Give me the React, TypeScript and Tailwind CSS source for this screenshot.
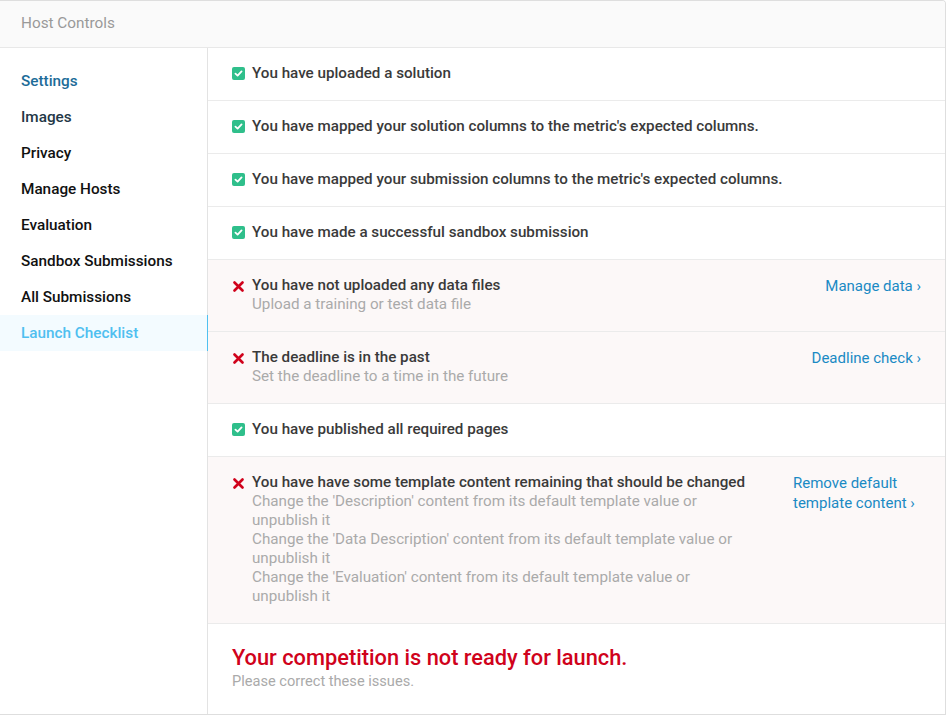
import React from "react";

const font = { fontFamily: "Roboto, 'Liberation Sans', sans-serif" };

function Check() {
  return (
    <span className="mt-[3px] flex h-[13px] w-[13px] shrink-0 items-center justify-center rounded-[2px] bg-[#2fbf8b]">
      <svg width="9" height="9" viewBox="0 0 10 10">
        <path d="M1.6 5.2 L4 7.4 L8.4 2.6" fill="none" stroke="#fff" strokeWidth="2" strokeLinecap="round" strokeLinejoin="round" />
      </svg>
    </span>
  );
}

function Cross() {
  return (
    <span className="mt-[4px] flex h-[12px] w-[13px] shrink-0 items-center justify-center">
      <svg width="11" height="11" viewBox="0 0 11 11">
        <path d="M1.5 1.5 L9.5 9.5 M9.5 1.5 L1.5 9.5" fill="none" stroke="#d0021b" strokeWidth="2.6" strokeLinecap="round" />
      </svg>
    </span>
  );
}

type Item = {
  ok: boolean;
  title: string;
  subs?: string[];
  link?: string;
  narrow?: boolean;
};

const items: Item[] = [
  { ok: true, title: "You have uploaded a solution" },
  { ok: true, title: "You have mapped your solution columns to the metric's expected columns." },
  { ok: true, title: "You have mapped your submission columns to the metric's expected columns." },
  { ok: true, title: "You have made a successful sandbox submission" },
  { ok: false, title: "You have not uploaded any data files", subs: ["Upload a training or test data file"], link: "Manage data" },
  { ok: false, title: "The deadline is in the past", subs: ["Set the deadline to a time in the future"], link: "Deadline check" },
  { ok: true, title: "You have published all required pages" },
  {
    ok: false,
    title: "You have have some template content remaining that should be changed",
    subs: [
      "Change the 'Description' content from its default template value or unpublish it",
      "Change the 'Data Description' content from its default template value or unpublish it",
      "Change the 'Evaluation' content from its default template value or unpublish it",
    ],
    link: "Remove default template content",
    narrow: true,
  },
];

const nav = [
  { label: "Settings", cls: "text-[#1d6c98]" },
  { label: "Images", cls: "text-[#233746]" },
  { label: "Privacy", cls: "text-[#111]" },
  { label: "Manage Hosts", cls: "text-[#111]" },
  { label: "Evaluation", cls: "text-[#111]" },
  { label: "Sandbox Submissions", cls: "text-[#111]" },
  { label: "All Submissions", cls: "text-[#111]" },
];

export default function App() {
  return (
    <div style={font} className="w-[947px] bg-white">
      <div className="w-[946px] overflow-hidden rounded-tr-[4px] border-t border-r border-b border-[#dedede] bg-white">
        <div className="flex h-[47px] items-center border-b border-[#e8e8e8] bg-[#fafafa] pb-[2px] pl-[21px] text-[15.3px] text-[#999]">
          Host Controls
        </div>
        <div className="flex">
          <div className="w-[208px] shrink-0 border-r border-[#e3e3e3] pt-[15px]">
            {nav.map((n) => (
              <div key={n.label} className={`flex h-[36px] items-center pl-[21px] text-[15.3px] font-medium ${n.cls}`}>
                {n.label}
              </div>
            ))}
            <div className="-mr-px flex h-[36px] items-center border-r border-[#4fc0f0] bg-[#f3fbff] pl-[21px] text-[15.3px] font-medium text-[#4fbff0]">
              Launch Checklist
            </div>
          </div>
          <div className="flex-1">
            {items.map((it, i) => (
              <div
                key={i}
                className={`flex items-start gap-[20px] border-b border-[#ebebeb] pt-4 pr-[24px] pb-[17px] pl-[24px] ${it.ok ? "bg-white" : "bg-[#fcf8f8]"}`}
              >
                <div className="flex min-w-0 flex-1 gap-[7px]">
                  {it.ok ? <Check /> : <Cross />}
                  <div className={`min-w-0 ${it.narrow ? "max-w-[500px]" : ""}`}>
                    <div className="text-[15.2px] leading-[19px] font-medium text-[#3a3a3a]">{it.title}</div>
                    {it.subs?.map((s) => (
                      <div key={s} className="text-[15.2px] leading-[19px] text-[#aaa]">
                        {s}
                      </div>
                    ))}
                  </div>
                </div>
                {it.link && (
                  <div
                    className={`shrink-0 text-[15px] leading-[20px] text-[#1a8ac4] ${it.narrow ? "w-[128px]" : ""}`}
                  >
                    {it.link} ›
                  </div>
                )}
              </div>
            ))}
            <div className="pt-5 pb-[23px] pl-[24px]">
              <div className="text-[21.8px] leading-[28px] font-medium text-[#d0021b]">
                Your competition is not ready for launch.
              </div>
              <div className="text-[14.6px] leading-[19px] text-[#aaa]">Please correct these issues.</div>
            </div>
          </div>
        </div>
      </div>
    </div>
  );
}
